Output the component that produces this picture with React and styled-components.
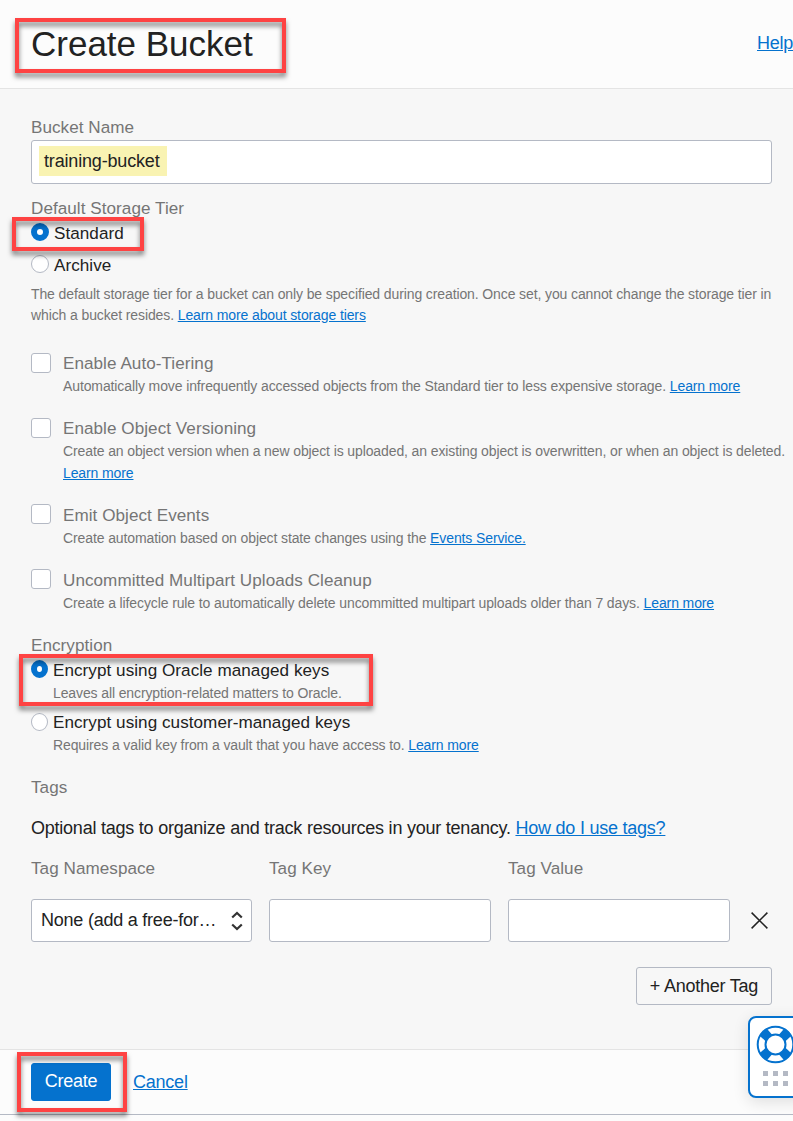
import React from "react";
import styled, { createGlobalStyle } from "styled-components";

const Global = createGlobalStyle`
  * { box-sizing: border-box; }
  body { margin: 0; background: #fcfcfc; overflow: hidden; }
`;

const Page = styled.div`
  position: relative;
  width: 793px;
  height: 1121px;
  overflow: hidden;
  display: flex;
  flex-direction: column;
  background: #fcfcfc;
  color: #222;
  font-family: "Liberation Sans", Arial, sans-serif;
  font-size: 18px;
  letter-spacing: -0.23px;
  white-space: nowrap;
`;

const Header = styled.header`
  height: 89px;
  flex: none;
  display: flex;
  justify-content: space-between;
  align-items: center;
  padding-left: 31px;
  border-bottom: 1px solid #e4e4e4;
`;

const Title = styled.h1`
  margin: 0;
  font-size: 35px;
  font-weight: 400;
  line-height: 40px;
  letter-spacing: 0;
`;

const Link = styled.a`
  color: #0572ce;
  text-decoration: underline;
  cursor: pointer;
`;

const HelpLink = styled(Link)`
  width: 36px;
  line-height: 20px;
  margin-bottom: 3px;
`;

const Body = styled.main`
  height: 960px;
  flex: none;
  padding: 28px 21px 0 31px;
  background: #f7f7f7;
`;

const Label = styled.div`
  height: 22px;
  line-height: 22px;
  margin-top: ${(p) => p.$top || 0}px;
  font-size: 17.1px;
  letter-spacing: 0.05px;
  color: #757575;
`;

const Field = styled.div`
  height: ${(p) => p.$height || 43}px;
  display: flex;
  align-items: center;
  justify-content: space-between;
  background: #fff;
  border: 1px solid #b4b9c4;
  border-radius: 3px;
`;

const Mark = styled.span`
  margin: 0 0 2px 7px;
  padding: 0 7px 0 5px;
  width: 128px;
  line-height: 30px;
  font-size: 18px;
  letter-spacing: -0.17px;
  background: #f9f3b2;
`;

const NameField = styled(Field)`
  margin-top: 1px;
`;

const Choice = styled.div`
  display: flex;
  align-items: flex-start;
  gap: ${(p) => p.$gap}px;
  margin-top: ${(p) => p.$top}px;
`;

const Radio = styled.span`
  flex: none;
  width: ${(p) => p.$width || 18}px;
  height: 18px;
  margin-top: ${(p) => p.$top || 0}px;
  border-radius: 50%;
  border: ${(p) => (p.$on ? "6.5px solid #0572ce" : "1px solid #b4b9c4")};
  background: #fff;
`;

const Checkbox = styled.span`
  flex: none;
  width: 20px;
  height: 20px;
  border: 1px solid #b4b9c4;
  border-radius: 3px;
  background: #fff;
`;

const OptionText = styled.div`
  padding: ${(p) => p.$top || 0}px 0 1px;
`;

const ChoiceText = styled.div`
  line-height: 22px;
  font-size: 17.1px;
  letter-spacing: 0.05px;
  color: ${(p) => (p.$muted ? "#757575" : "#222")};
`;

const Hint = styled.p`
  margin: ${(p) => p.$top || 0}px 0 0;
  font-size: 14px;
  letter-spacing: -0.112px;
  line-height: ${(p) => p.$line || 22}px;
  color: #757575;
`;

const Intro = styled.p`
  margin: 18px 0 0;
  line-height: 22px;
`;

const TagGrid = styled.div`
  display: grid;
  grid-template-columns: 221px 222px 222px 21px;
  column-gap: 17px;
  row-gap: 19px;
  align-items: center;
  margin-top: 19px;
`;

const DeleteButton = styled.button`
  display: flex;
  padding: 0;
  border: 0;
  background: none;
  margin-left: 4px;
`;

const SelectText = styled.span`
  padding: 0 0 1px 9px;
`;

const Arrows = styled.svg`
  margin: 1px 7px 0 0;
`;

const AddRow = styled.div`
  display: flex;
  justify-content: flex-end;
  margin-top: 25px;
`;

const Button = styled.button`
  width: ${(p) => p.$width}px;
  height: 38px;
  padding: 0 0 ${(p) => (p.$primary ? 2 : 0)}px;
  font: inherit;
  letter-spacing: inherit;
  line-height: 20px;
  color: ${(p) => (p.$primary ? "#fff" : "#222")};
  background: ${(p) => (p.$primary ? "#0572ce" : "#f7f7f7")};
  border: 1px solid ${(p) => (p.$primary ? "#0572ce" : "#b4b9c4")};
  border-radius: 3px;
`;

const Footer = styled.footer`
  flex: none;
  height: 66px;
  display: flex;
  align-items: center;
  gap: 22px;
  padding-left: 31px;
  border-top: 1px solid #e4e4e4;
  border-bottom: 1px solid #b4b9c4;
`;

const Callout = styled.div`
  position: absolute;
  left: ${(p) => p.$x}px;
  top: ${(p) => p.$y}px;
  width: ${(p) => p.$w}px;
  height: ${(p) => p.$h}px;
  border: 4px solid #fe4343;
  filter: drop-shadow(0 4px 2.5px rgba(0, 0, 0, 0.5));
`;

const HelpWidget = styled.aside`
  position: absolute;
  left: 748px;
  top: 1016px;
  width: 60px;
  height: 82px;
  padding: 7px 0 0 6px;
  background: #fff;
  border: 2px solid #0572ce;
  border-radius: 8px;
  box-shadow: 0 4px 16px rgba(0, 0, 0, 0.12);
`;

const Buoy = styled.svg`
  display: block;
`;

const Dots = styled.div`
  display: grid;
  grid-template-columns: repeat(3, 5px);
  gap: 5px;
  margin: 7px 0 0 7px;
`;

const Dot = styled.i`
  height: 5px;
  background: #b4b9c4;
`;

function Lifebuoy() {
  return (
    <Buoy width="39" height="39" viewBox="-19.5 -19.5 39 39" fill="none">
      {[45, 135, 225, 315].map((a) => (
        <path key={a} d="M9 -4.6 L17.5 -5 A18 18 0 0 1 17.5 5 L9 4.6 Z" fill="#0572ce" transform={`rotate(${a})`} />
      ))}
      <circle r="10" fill="#fff" stroke="#0572ce" strokeWidth="2" />
      <circle r="17.8" stroke="#0572ce" strokeWidth="2" />
    </Buoy>
  );
}

const options = [
  {
    top: 27,
    label: "Enable Auto-Tiering",
    hint: "Automatically move infrequently accessed objects from the Standard tier to less expensive storage. ",
    link: "Learn more",
  },
  {
    top: 20,
    label: "Enable Object Versioning",
    hint: "Create an object version when a new object is uploaded, an existing object is overwritten, or when an object is deleted.",
    wrap: true,
    link: "Learn more",
  },
  {
    top: 19,
    textTop: 1,
    label: "Emit Object Events",
    hint: "Create automation based on object state changes using the ",
    link: "Events Service.",
  },
  {
    top: 19,
    textTop: 1,
    label: "Uncommitted Multipart Uploads Cleanup",
    hint: "Create a lifecycle rule to automatically delete uncommitted multipart uploads older than 7 days. ",
    link: "Learn more",
  },
];

export default function App() {
  return (
    <Page>
      <Global />
      <Header>
        <Title>Create Bucket</Title>
        <HelpLink>Help</HelpLink>
      </Header>
      <Body>
        <Label>Bucket Name</Label>
        <NameField $height={44}>
          <Mark>training-bucket</Mark>
        </NameField>

        <Label $top={14}>Default Storage Tier</Label>
        <Choice $gap={5} $top={3}>
          <Radio $on />
          <ChoiceText>Standard</ChoiceText>
        </Choice>
        <Choice $gap={5} $top={10}>
          <Radio />
          <ChoiceText>Archive</ChoiceText>
        </Choice>
        <Hint $top={7} $line={21}>
          The default storage tier for a bucket can only be specified during creation. Once set, you cannot change the storage tier in
          <br />
          which a bucket resides. <Link>Learn more about storage tiers</Link>
        </Hint>

        {options.map((o) => (
          <Choice key={o.label} $gap={12} $top={o.top}>
            <Checkbox />
            <OptionText $top={o.textTop}>
              <ChoiceText $muted>{o.label}</ChoiceText>
              <Hint>
                {o.hint}
                {o.wrap && <br />}
                <Link>{o.link}</Link>
              </Hint>
            </OptionText>
          </Choice>
        ))}

        <Label $top={20}>Encryption</Label>
        <Choice $gap={5} $top={3}>
          <Radio $on $width={17} />
          <OptionText>
            <ChoiceText>Encrypt using Oracle managed keys</ChoiceText>
            <Hint>Leaves all encryption-related matters to Oracle.</Hint>
          </OptionText>
        </Choice>
        <Choice $gap={5} $top={7}>
          <Radio $top={1} $width={17} />
          <OptionText>
            <ChoiceText>Encrypt using customer-managed keys</ChoiceText>
            <Hint>
              Requires a valid key from a vault that you have access to. <Link>Learn more</Link>
            </Hint>
          </OptionText>
        </Choice>

        <Label $top={20}>Tags</Label>
        <Intro>
          Optional tags to organize and track resources in your tenancy. <Link>How do I use tags?</Link>
        </Intro>
        <TagGrid>
          <Label>Tag Namespace</Label>
          <Label>Tag Key</Label>
          <Label>Tag Value</Label>
          <span />
          <Field>
            <SelectText>None (add a free-for…</SelectText>
            <Arrows width="14" height="20" viewBox="0 0 14 20" fill="none" stroke="#333" strokeWidth="2.2">
              <path d="M2.2 6.5 L7 2 L11.8 6.5 M2.2 13.5 L7 18 L11.8 13.5" />
            </Arrows>
          </Field>
          <Field />
          <Field />
          <DeleteButton aria-label="Remove tag">
            <svg width="17" height="17" viewBox="0 0 17 17" stroke="#222" strokeWidth="1.5">
              <path d="M.6 .6 L16.4 16.4 M16.4 .6 L.6 16.4" />
            </svg>
          </DeleteButton>
        </TagGrid>
        <AddRow>
          <Button $width={136}>+ Another Tag</Button>
        </AddRow>
      </Body>
      <Footer>
        <Button $primary $width={80}>Create</Button>
        <Link>Cancel</Link>
      </Footer>

      <Callout $x={15} $y={18} $w={271} $h={55} />
      <Callout $x={12} $y={217} $w={132} $h={34} />
      <Callout $x={19} $y={654} $w={354} $h={52} />
      <Callout $x={17} $y={1052} $w={110} $h={60} />

      <HelpWidget>
        <Lifebuoy />
        <Dots>
          {[0, 1, 2, 3, 4, 5].map((i) => (
            <Dot key={i} />
          ))}
        </Dots>
      </HelpWidget>
    </Page>
  );
}
